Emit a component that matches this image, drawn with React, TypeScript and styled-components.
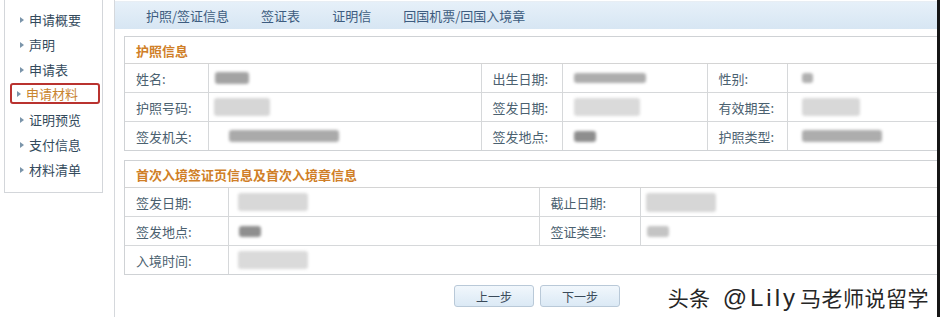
import React from 'react'
import styled, { createGlobalStyle } from 'styled-components'

const GlobalStyle = createGlobalStyle`
  html, body {
    margin: 0;
    padding: 0;
    background: #fff;
  }
  body {
    font-family: "Noto Sans CJK SC", "Noto Sans", sans-serif;
  }
`

type Blur = { w: number; h: number; tone: string; off?: number }
type Cell = { label: string; blur?: Blur }

const navItems = ['申请概要', '声明', '申请表', '申请材料', '证明预览', '支付信息', '材料清单']
const tabs = ['护照/签证信息', '签证表', '证明信', '回国机票/回国入境章']

const passportRows: Cell[][] = [
  [
    { label: '姓名:', blur: { w: 34, h: 12, tone: '#a3a3a3', off: 6 } },
    { label: '出生日期:', blur: { w: 72, h: 10, tone: '#adadad', off: 11 } },
    { label: '性别:', blur: { w: 11, h: 10, tone: '#b0b0b0', off: 14 } },
  ],
  [
    { label: '护照号码:', blur: { w: 56, h: 18, tone: '#d6d6d6', off: 5 } },
    { label: '签发日期:', blur: { w: 66, h: 18, tone: '#dadada', off: 11 } },
    { label: '有效期至:', blur: { w: 58, h: 18, tone: '#d8d8d8', off: 14 } },
  ],
  [
    { label: '签发机关:', blur: { w: 110, h: 12, tone: '#aaaaaa', off: 20 } },
    { label: '签发地点:', blur: { w: 22, h: 11, tone: '#8e8e8e', off: 11 } },
    { label: '护照类型:', blur: { w: 80, h: 12, tone: '#adadad', off: 14 } },
  ],
]

const entryRows: Cell[][] = [
  [
    { label: '签发日期:', blur: { w: 70, h: 18, tone: '#d8d8d8', off: 9 } },
    { label: '截止日期:', blur: { w: 70, h: 19, tone: '#d6d6d6', off: 5 } },
  ],
  [
    { label: '签发地点:', blur: { w: 22, h: 11, tone: '#8f8f8f', off: 10 } },
    { label: '签证类型:', blur: { w: 22, h: 11, tone: '#c4c4c4', off: 6 } },
  ],
  [{ label: '入境时间:', blur: { w: 70, h: 18, tone: '#dadada', off: 9 } }],
]

const App: React.FC = () => {
  return (
    <>
      <GlobalStyle />
      <Page>
        <SideColumn>
          <SideBox>
            {navItems.map(item => (
              <NavItem key={item} $active={item === '申请材料'}>
                <Arrow />
                {item}
              </NavItem>
            ))}
          </SideBox>
        </SideColumn>
        <Main>
          <TabBar>
            {tabs.map(t => (
              <Tab key={t}>{t}</Tab>
            ))}
          </TabBar>

          <Section>
            <InfoTable>
              <colgroup>
                <col style={{ width: 83 }} />
                <col style={{ width: 273 }} />
                <col style={{ width: 81 }} />
                <col style={{ width: 145 }} />
                <col style={{ width: 80 }} />
                <col />
              </colgroup>
              <tbody>
                <tr>
                  <HeadCell colSpan={6}>护照信息</HeadCell>
                </tr>
                {passportRows.map((row, i) => (
                  <tr key={i}>
                    {row.map(c => (
                      <React.Fragment key={c.label}>
                        <LabelCell>{c.label}</LabelCell>
                        <ValueCell>{c.blur && <Smudge {...c.blur} />}</ValueCell>
                      </React.Fragment>
                    ))}
                  </tr>
                ))}
              </tbody>
            </InfoTable>
          </Section>

          <Section>
            <InfoTable>
              <colgroup>
                <col style={{ width: 103 }} />
                <col style={{ width: 311 }} />
                <col style={{ width: 101 }} />
                <col />
              </colgroup>
              <tbody>
                <tr>
                  <HeadCell colSpan={4}>首次入境签证页信息及首次入境章信息</HeadCell>
                </tr>
                {entryRows.map((row, i) => (
                  <tr key={i}>
                    {row.map(c => (
                      <React.Fragment key={c.label}>
                        <LabelCell>{c.label}</LabelCell>
                        <ValueCell>{c.blur && <Smudge {...c.blur} />}</ValueCell>
                      </React.Fragment>
                    ))}
                  </tr>
                ))}
              </tbody>
            </InfoTable>
          </Section>

          <ButtonRow>
            <StepButton>上一步</StepButton>
            <StepButton>下一步</StepButton>
          </ButtonRow>
        </Main>
        <Watermark>
          头条<Latin>@Lily</Latin>马老师说留学
        </Watermark>
      </Page>
    </>
  )
}

const Smudge: React.FC<Blur> = ({ w, h, tone, off = 0 }) => (
  <SmudgeBox style={{ width: w, height: h, background: tone, marginLeft: off }} />
)

const Page = styled.div`
  position: relative;
  display: flex;
  width: 940px;
  height: 317px;
  box-sizing: border-box;
  border-right: 3px solid #161616;
  overflow: hidden;
  background: #fff;
`

const SideColumn = styled.div`
  width: 114px;
  flex-shrink: 0;
  padding-left: 4px;
  box-sizing: border-box;
`

const SideBox = styled.div`
  width: 99px;
  box-sizing: border-box;
  margin-top: -1px;
  padding: 7px 0 10px;
  border: 1px solid #d3d6da;
`

const NavItem = styled.div<{ $active?: boolean }>`
  display: flex;
  align-items: center;
  width: 90px;
  height: 25px;
  margin-left: 5px;
  padding-left: 10px;
  box-sizing: border-box;
  font-size: 13px;
  color: ${p => (p.$active ? '#c9842f' : '#334a5c')};
  ${p =>
    p.$active &&
    `
    height: 21px;
    margin: 1px 0 3px 5px;
    border: 2px solid #b9322f;
    border-radius: 3px;
    padding-left: 5px;
  `}
`

const Arrow = styled.span`
  width: 0;
  height: 0;
  margin-right: 5px;
  border-top: 3.5px solid transparent;
  border-bottom: 3.5px solid transparent;
  border-left: 4px solid #7b95aa;
`

const Main = styled.div`
  flex: 1;
  min-width: 0;
  border-left: 1px solid #d5d8dc;
  padding-top: 1px;
  overflow: hidden;
`

const TabBar = styled.div`
  display: flex;
  align-items: center;
  gap: 32px;
  height: 28px;
  padding-left: 31px;
  background: linear-gradient(#e6f0f9, #d7e6f3);
  border-top: 1px solid #e8eef4;
  box-sizing: border-box;
`

const Tab = styled.span`
  font-size: 13px;
  color: #3d5c80;
`

const Section = styled.div`
  margin: 7px -1px 0 9px;
  border: 1px solid #cfd2d5;
  & + & {
    margin-top: 9px;
  }
`

const InfoTable = styled.table`
  width: 100%;
  border-collapse: collapse;
  table-layout: fixed;
`

const HeadCell = styled.td`
  height: 26px;
  padding: 0 0 0 11px;
  font-size: 13px;
  font-weight: bold;
  color: #d07f28;
  border-bottom: 1px solid #d4d4d4;
`

const LabelCell = styled.td`
  height: 28px;
  padding: 0 0 0 11px;
  font-size: 13px;
  color: #4b6170;
  border: 1px solid #d6d8da;
  border-left: none;
  white-space: nowrap;
  tr:last-child > & {
    border-bottom: none;
  }
`

const ValueCell = styled.td`
  height: 28px;
  padding: 0;
  border: 1px solid #d6d8da;
  tr:last-child > & {
    border-bottom: none;
  }
  &:last-child {
    border-right: none;
  }
`

const SmudgeBox = styled.div`
  filter: blur(1.6px);
  border-radius: 3px;
`

const ButtonRow = styled.div`
  display: flex;
  justify-content: center;
  gap: 6px;
  padding-left: 22px;
  margin-top: 10px;
`

const StepButton = styled.button`
  width: 80px;
  height: 22px;
  padding: 0;
  font-family: "Noto Sans CJK SC", sans-serif;
  font-size: 12px;
  color: #3a4a5a;
  background: linear-gradient(#f1f7fc, #dbe9f5);
  border: 1px solid #b9c9d8;
  border-radius: 3px;
`

const Watermark = styled.div`
  position: absolute;
  right: 8px;
  top: 282px;
  font-family: "Noto Sans CJK SC", sans-serif;
  font-size: 21px;
  letter-spacing: 0.5px;
  color: #262626;
  white-space: nowrap;
  text-shadow: 0 0 2px rgba(255, 255, 255, 0.9);
`

const Latin = styled.span`
  margin: 0 2px 0 12px;
  font-family: "Liberation Sans", sans-serif;
  font-size: 24px;
  letter-spacing: 3px;
`

export default App
